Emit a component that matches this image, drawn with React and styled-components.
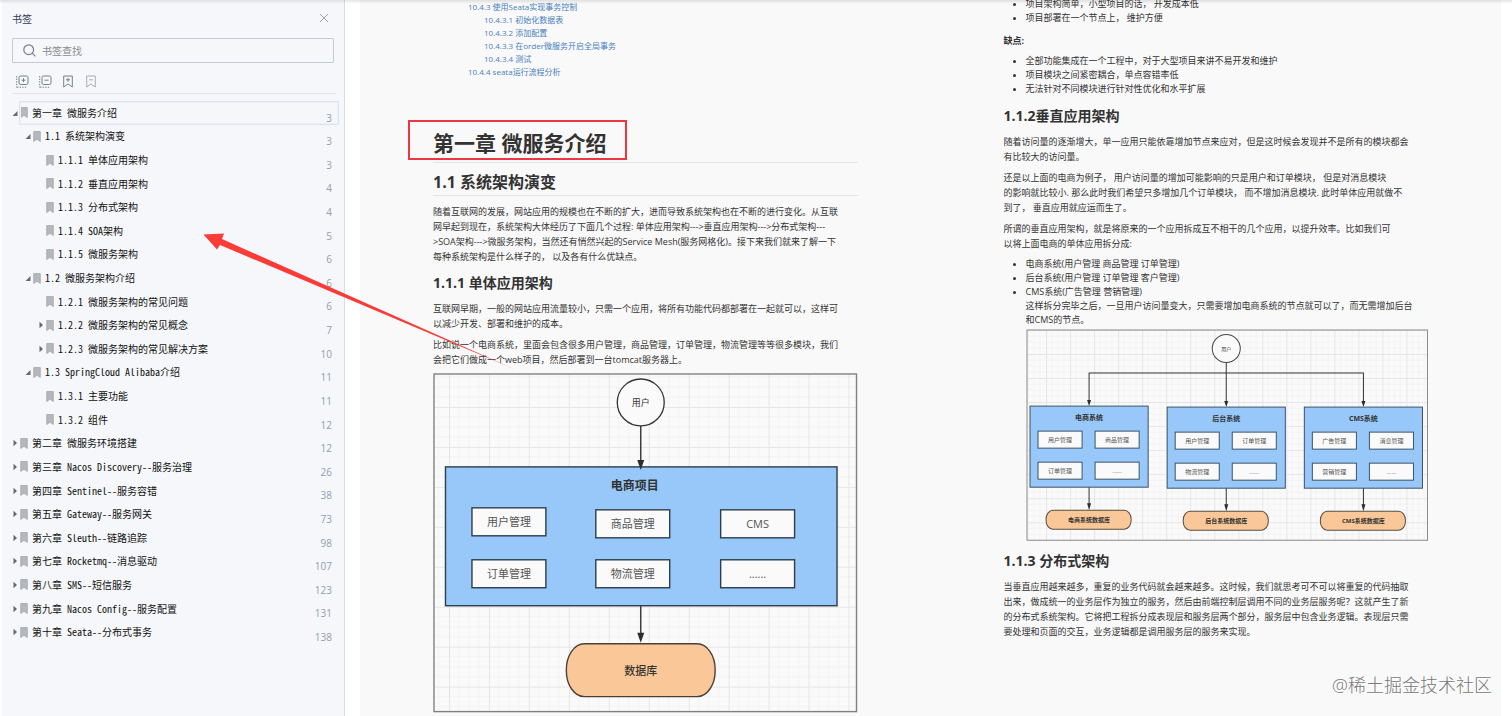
import styled, { createGlobalStyle, css } from 'styled-components';

const GlobalStyle = createGlobalStyle`
  * {
    box-sizing: border-box;
  }
  body {
    margin: 0;
    background: #fff;
    font-family: 'Open Sans', 'Noto Sans CJK SC', sans-serif;
    color: #333;
  }
`;

const Reader = styled.div`
  position: relative;
  display: flex;
  height: 100vh;
  overflow: hidden;
`;

const TopShadow = styled.div`
  position: absolute;
  top: 0;
  left: 0;
  right: 0;
  height: 4px;
  background: linear-gradient(rgba(0, 0, 0, 0.1), rgba(0, 0, 0, 0));
  pointer-events: none;
`;

/* ---------- sidebar ---------- */

const Sidebar = styled.aside`
  display: flex;
  flex-direction: column;
  flex: 0 0 345px;
  padding: 8px 5px 72px 10px;
  background: #f5f7fa;
  border-left: 2px solid #fcfdfe;
  border-right: 1px solid #d9dde3;
`;

const SidebarHeader = styled.header`
  display: flex;
  align-items: center;
  justify-content: space-between;
  height: 20px;
  padding-right: 8px;
`;

const SidebarTitle = styled.h2`
  margin: 0;
  font-size: 10px;
  font-weight: 400;
  color: #333d59;
`;

const IconButton = styled.button`
  display: flex;
  align-items: center;
  justify-content: center;
  width: 14px;
  height: 14px;
  padding: 0;
  border: 0;
  background: none;
  color: ${props => (props.$faded ? '#a9adb3' : '#7b8087')};
  cursor: pointer;
`;

const SearchBox = styled.label`
  display: flex;
  align-items: center;
  gap: 6px;
  height: 25px;
  margin: 10px 5px 0 0;
  padding: 0 10px;
  border: 1px solid #c6cad1;
  border-radius: 1px;
  color: #7b8087;
`;

const SearchInput = styled.input`
  flex: 1;
  min-width: 0;
  padding: 0;
  border: 0;
  outline: 0;
  background: none;
  font-family: inherit;
  font-size: 10px;

  &::placeholder {
    color: #8a8c90;
    opacity: 1;
  }
`;

const Toolbar = styled.div`
  display: flex;
  align-items: center;
  gap: 9px;
  height: 31px;
  margin-right: 3px;
  padding: 7px 0 0 3px;
  border-bottom: 1px solid #e2e5ea;
`;

const BookmarkList = styled.ul`
  display: grid;
  grid-auto-rows: 1fr;
  flex: 1;
  margin: 7px 0 0;
  padding: 0;
  list-style: none;
`;

const BookmarkRow = styled.li`
  display: flex;
  align-items: center;
  position: relative;
  padding-left: ${props => props.$level * 13}px;

  ${props => props.$selected && css`
    &::before {
      content: '';
      position: absolute;
      inset: 0 0 0 7px;
      border: 1px solid #e1e5ea;
      box-shadow: inset 0 0 0 1px #eceff3;
    }
  `}
`;

const Toggle = styled.span`
  display: flex;
  width: 8px;
  color: #666a70;
`;

const BookmarkLink = styled.a`
  display: flex;
  align-items: center;
  flex: 1;
  gap: 4px;
  font-family: 'Noto Sans Mono CJK SC', 'Liberation Mono', 'Noto Sans CJK SC', monospace;
  font-size: 10px;
  line-height: 14px;
  color: #111;
  text-decoration: none;
  white-space: pre;
`;

const PageNumber = styled.span`
  align-self: flex-end;
  padding-right: 7px;
  font-size: 10px;
  line-height: 14px;
  color: #949db0;
`;

/* ---------- document ---------- */

const Pages = styled.main`
  display: grid;
  grid-template-columns: 1fr 1fr;
  flex: 1;
  min-width: 0;
  margin: 0 11px 0 15px;
  background: #f9f9f9;
`;

const Page = styled.article`
  min-width: 0;
  padding: 0 73px;
`;

const Toc = styled.nav`
  display: flex;
  flex-direction: column;
  align-items: flex-start;
  padding-left: 35px;
`;

const TocLink = styled.a`
  padding-left: ${props => (props.$nested ? 16 : 0)}px;
  font-size: 8px;
  line-height: 13px;
  color: #4a80bd;
  text-decoration: none;
`;

const ChapterTitle = styled.h1`
  margin: 49px 0 0;
  padding-bottom: 3px;
  border-bottom: 1px solid #e4e4e4;
  font-size: 21px;
  line-height: 32px;
`;

const Highlight = styled.span`
  position: relative;

  &::after {
    content: '';
    position: absolute;
    inset: -9px -21px -3px -25px;
    border: 2px solid #ee3742;
  }
`;

const SectionTitle = styled.h2`
  margin: 8px 0;
  padding-bottom: 2px;
  border-bottom: 1px solid #e4e4e4;
  font-size: 16px;
  line-height: 22px;
`;

const TopicTitle = styled.h3`
  margin: 9px 0 8px;
  font-size: 14px;
  line-height: 20px;
`;

const Paragraph = styled.p`
  margin: 6px 0;
  font-size: 9px;
  font-weight: ${props => (props.$strong ? 700 : 400)};
  line-height: 15px;
  white-space: nowrap;
`;

const Bullets = styled.ul`
  margin: ${props => (props.$cut ? '-3px 0 8px' : '6px 0 10px')};
  padding-left: 22px;
  font-size: 9px;
  line-height: 14px;
  white-space: nowrap;
`;

const Figure = styled.svg`
  display: block;
  width: 100%;
  margin-top: ${props => (props.$spaced ? 6 : 2)}px;
  font-family: 'Open Sans', 'Noto Sans CJK SC', sans-serif;
`;

const Watermark = styled.div`
  position: absolute;
  right: 20px;
  bottom: 18px;
  font-size: 18px;
  font-weight: 300;
  line-height: 26px;
  color: #777;
  text-shadow: 1px 1px 0 #fff;
`;

const PointerArrow = styled.svg`
  position: absolute;
  top: 230px;
  left: 200px;
  pointer-events: none;
`;

/* ---------- data ---------- */

const bookmarks = [
  { level: 0, title: '第一章 微服务介绍', page: 3, state: 'open', selected: true },
  { level: 1, title: '1.1 系统架构演变', page: 3, state: 'open' },
  { level: 2, title: '1.1.1 单体应用架构', page: 3 },
  { level: 2, title: '1.1.2 垂直应用架构', page: 4 },
  { level: 2, title: '1.1.3 分布式架构', page: 4 },
  { level: 2, title: '1.1.4 SOA架构', page: 5 },
  { level: 2, title: '1.1.5 微服务架构', page: 6 },
  { level: 1, title: '1.2 微服务架构介绍', page: 6, state: 'open' },
  { level: 2, title: '1.2.1 微服务架构的常见问题', page: 6 },
  { level: 2, title: '1.2.2 微服务架构的常见概念', page: 7, state: 'closed' },
  { level: 2, title: '1.2.3 微服务架构的常见解决方案', page: 10, state: 'closed' },
  { level: 1, title: '1.3 SpringCloud Alibaba介绍', page: 11, state: 'open' },
  { level: 2, title: '1.3.1 主要功能', page: 11 },
  { level: 2, title: '1.3.2 组件', page: 12 },
  { level: 0, title: '第二章 微服务环境搭建', page: 12, state: 'closed' },
  { level: 0, title: '第三章 Nacos Discovery--服务治理', page: 26, state: 'closed' },
  { level: 0, title: '第四章 Sentinel--服务容错', page: 38, state: 'closed' },
  { level: 0, title: '第五章 Gateway--服务网关', page: 73, state: 'closed' },
  { level: 0, title: '第六章 Sleuth--链路追踪', page: 98, state: 'closed' },
  { level: 0, title: '第七章 Rocketmq--消息驱动', page: 107, state: 'closed' },
  { level: 0, title: '第八章 SMS--短信服务', page: 123, state: 'closed' },
  { level: 0, title: '第九章 Nacos Config--服务配置', page: 131, state: 'closed' },
  { level: 0, title: '第十章 Seata--分布式事务', page: 138, state: 'closed' },
];

const toc = [
  { title: '10.4.3 使用Seata实现事务控制' },
  { title: '10.4.3.1 初始化数据表', nested: true },
  { title: '10.4.3.2 添加配置', nested: true },
  { title: '10.4.3.3 在order微服务开启全局事务', nested: true },
  { title: '10.4.3.4 测试', nested: true },
  { title: '10.4.4 seata运行流程分析' },
];

const projectModules = [
  { x: 39, y: 135, label: '用户管理' },
  { x: 163, y: 137, label: '商品管理' },
  { x: 288, y: 137, label: 'CMS' },
  { x: 39, y: 187, label: '订单管理' },
  { x: 163, y: 187, label: '物流管理' },
  { x: 288, y: 187, label: '......' },
];

const systems = [
  { x: 4, y: 77, name: '电商系统', modules: ['用户管理', '商品管理', '订单管理', '......'] },
  { x: 141, y: 78, name: '后台系统', modules: ['用户管理', '订单管理', '物流管理', '......'] },
  { x: 278, y: 78, name: 'CMS系统', modules: ['广告管理', '消息管理', '营销管理', '......'] },
];

/* ---------- icons ---------- */

const CloseIcon = () => (
  <svg width="10" height="10" viewBox="0 0 10 10" stroke="#9a9ea6" fill="none">
    <path d="M1 1l8 8M9 1l-8 8" />
  </svg>
);

const SearchIcon = () => (
  <svg width="13" height="13" viewBox="0 0 13 13" stroke="currentColor" strokeWidth="1.2" fill="none">
    <circle cx="5.7" cy="5.7" r="4.9" />
    <path d="M9.2 9.2l3.2 3.2" />
  </svg>
);

const TreeIcon = ({ plus }) => (
  <svg width="13" height="13" viewBox="0 0 13 13" stroke="currentColor" fill="none">
    <rect x="3" y="1" width="9" height="8.5" rx="1.5" />
    <path d={plus ? 'M5.5 5.2h4M7.5 3.2v4' : 'M5.5 5.2h4'} />
    <path d="M.7 1v11.5M1 12.2h10" strokeDasharray="1.4 1.2" />
  </svg>
);

const RibbonIcon = ({ plus }) => (
  <svg width="12" height="13" viewBox="0 0 12 13" stroke="currentColor" fill="none">
    <path d="M1.7 1h8.6v11L6 9 1.7 12z" />
    <path d={plus ? 'M4 4.8h4M6 2.8v4' : 'M4 4.8h4'} />
  </svg>
);

const BookmarkIcon = () => (
  <svg width="8" height="11" viewBox="0 0 8 11">
    <path d="M.7.5h6.6v10L4 8.3.7 10.5z" fill="#b4b7bb" stroke="#9fa3a8" strokeWidth=".7" />
  </svg>
);

const ToggleIcon = ({ state }) => (
  <svg width="6" height="8" viewBox="0 0 6 8" fill="currentColor">
    {state === 'open' && <path d="M5.5 2v5H.5z" />}
    {state === 'closed' && <path d="M1.5.8L5 4 1.5 7.2z" />}
  </svg>
);

/* ---------- diagrams ---------- */

const Grid = ({ id, size, x, y }) => {
  const minor = size / 4;
  return (
    <pattern id={id} x={x} y={y} width={size} height={size} patternUnits="userSpaceOnUse">
      <path
        d={[1, 2, 3].map(n => `M${n * minor} 0v${size}M0 ${n * minor}h${size}`).join('')}
        stroke="#f3f3f3"
        fill="none"
      />
      <path d={`M0 0v${size}M0 0h${size}`} stroke="#e6e6e6" strokeWidth="2" fill="none" />
    </pattern>
  );
};

const ArrowHead = ({ x, y, w = 7, h = 10 }) => (
  <path d={`M${x} ${y}l${-w / 2} ${-h}h${w}z`} fill="#2d2d2d" />
);

const MonolithDiagram = () => (
  <Figure $spaced viewBox="0 0 425 340" textAnchor="middle" fill="#333" role="img" aria-label="单体应用架构">
    <defs>
      <Grid id="grid-large" size={40} x={16} y={34} />
    </defs>
    <rect x="1" y="1" width="423" height="338" fill="#fafafa" />
    <rect x="1" y="1" width="423" height="338" fill="url(#grid-large)" stroke="#808080" strokeWidth="1.4" />
    <circle cx="208" cy="29.5" r="23.5" fill="#fafafa" stroke="#333" strokeWidth="1.3" />
    <text x="208" y="33" fontSize="9">用户</text>
    <path d="M208 53v40M208 233v34" stroke="#333" strokeWidth="1.4" />
    <rect x="12.5" y="94" width="392" height="139" fill="#97c8f9" stroke="#2c3e4a" strokeWidth="1.4" />
    <ArrowHead x={208} y={97} />
    <text x="202" y="117" fontSize="12" fontWeight="700">电商项目</text>
    {projectModules.map(({ x, y, label }) => (
      <g key={label}>
        <rect x={x} y={y} width="74" height="28" fill="#fafafa" stroke="#2c3e4a" strokeWidth="1.4" />
        <text x={x + 37} y={y + 18} fontSize="11" fill="#555">{label}</text>
      </g>
    ))}
    <ArrowHead x={208} y={270} />
    <rect x="133.5" y="271" width="149" height="53" rx="18" ry="26" fill="#fac898" stroke="#4a4036" strokeWidth="1.4" />
    <text x="208" y="302" fontSize="11" fontWeight="500">数据库</text>
  </Figure>
);

const VerticalDiagram = () => (
  <Figure viewBox="0 0 402 212" textAnchor="middle" fill="#333" role="img" aria-label="垂直应用架构">
    <defs>
      <Grid id="grid-small" size={24} x={20} y={1} />
    </defs>
    <rect x="1" y="1" width="400" height="210" fill="#fafafa" />
    <rect x="1" y="1" width="400" height="210" fill="url(#grid-small)" stroke="#8a8a8a" />
    <circle cx="200" cy="19.5" r="14" fill="#fafafa" stroke="#444" />
    <text x="200" y="22" fontSize="5">用户</text>
    <path d="M200 34v40M63 74V44h274v30" stroke="#333" fill="none" />
    {systems.map(({ x, y, name, modules }) => (
      <g key={name}>
        <rect x={x} y={y} width="118" height="81" fill="#97c8f9" stroke="#3c5468" />
        <ArrowHead x={x + 59} y={y} w={4} h={6} />
        <text x={x + 59} y={y + 14} fontSize="7" fontWeight="700">{name}</text>
        {modules.map((label, i) => {
          const left = x + 8 + (i % 2) * 57;
          const top = y + 25 + Math.floor(i / 2) * 31;
          return (
            <g key={label}>
              <rect x={left} y={top} width="44" height="17" fill="#fafafa" stroke="#3c5468" />
              <text x={left + 22} y={top + 11} fontSize="6" fill="#555">{label}</text>
            </g>
          );
        })}
        <path d={`M${x + 59} ${y + 81}v18`} stroke="#333" />
        <ArrowHead x={x + 59} y={y + 104} w={4} h={7} />
        <rect x={x + 16} y={y + 104} width="85" height="19" rx="7" ry="9" fill="#fac898" stroke="#5a4c40" />
        <text x={x + 59} y={y + 116} fontSize="6" fontWeight="700">{name}数据库</text>
      </g>
    ))}
  </Figure>
);

/* ---------- app ---------- */

const Lines = ({ text }) =>
  text.map((line, i) => (
    <span key={line}>
      {i > 0 && <br />}
      {line}
    </span>
  ));

function BookmarkPanel() {
  return (
    <Sidebar>
      <SidebarHeader>
        <SidebarTitle>书签</SidebarTitle>
        <IconButton aria-label="关闭"><CloseIcon /></IconButton>
      </SidebarHeader>
      <SearchBox>
        <SearchIcon />
        <SearchInput type="text" placeholder="书签查找" aria-label="书签查找" />
      </SearchBox>
      <Toolbar>
        <IconButton aria-label="展开"><TreeIcon plus /></IconButton>
        <IconButton aria-label="折叠"><TreeIcon /></IconButton>
        <IconButton aria-label="添加书签"><RibbonIcon plus /></IconButton>
        <IconButton aria-label="删除书签" $faded><RibbonIcon /></IconButton>
      </Toolbar>
      <BookmarkList>
        {bookmarks.map(({ level, title, page, state, selected }) => (
          <BookmarkRow key={title} $level={level} $selected={selected}>
            <Toggle><ToggleIcon state={state} /></Toggle>
            <BookmarkLink href="#">
              <BookmarkIcon />
              {title}
            </BookmarkLink>
            <PageNumber>{page}</PageNumber>
          </BookmarkRow>
        ))}
      </BookmarkList>
    </Sidebar>
  );
}

function App() {
  return (
    <Reader>
      <GlobalStyle />
      <BookmarkPanel />
      <Pages>
        <Page>
          <Toc>
            {toc.map(({ title, nested }) => (
              <TocLink key={title} href="#" $nested={nested}>{title}</TocLink>
            ))}
          </Toc>
          <ChapterTitle><Highlight>第一章 微服务介绍</Highlight></ChapterTitle>
          <SectionTitle>1.1 系统架构演变</SectionTitle>
          <Paragraph>
            <Lines
              text={[
                '随着互联网的发展，网站应用的规模也在不断的扩大，进而导致系统架构也在不断的进行变化。从互联',
                '网早起到现在，系统架构大体经历了下面几个过程: 单体应用架构--->垂直应用架构--->分布式架构---',
                '>SOA架构--->微服务架构，当然还有悄然兴起的Service Mesh(服务网格化)。接下来我们就来了解一下',
                '每种系统架构是什么样子的， 以及各有什么优缺点。',
              ]}
            />
          </Paragraph>
          <TopicTitle>1.1.1 单体应用架构</TopicTitle>
          <Paragraph>
            <Lines
              text={[
                '互联网早期，一般的网站应用流量较小，只需一个应用，将所有功能代码都部署在一起就可以，这样可',
                '以减少开发、部署和维护的成本。',
              ]}
            />
          </Paragraph>
          <Paragraph>
            <Lines
              text={[
                '比如说一个电商系统，里面会包含很多用户管理，商品管理，订单管理，物流管理等等很多模块，我们',
                '会把它们做成一个web项目，然后部署到一台tomcat服务器上。',
              ]}
            />
          </Paragraph>
          <MonolithDiagram />
        </Page>
        <Page>
          <Bullets $cut>
            <li>项目架构简单，小型项目的话， 开发成本低</li>
            <li>项目部署在一个节点上， 维护方便</li>
          </Bullets>
          <Paragraph $strong>缺点:</Paragraph>
          <Bullets>
            <li>全部功能集成在一个工程中，对于大型项目来讲不易开发和维护</li>
            <li>项目模块之间紧密耦合，单点容错率低</li>
            <li>无法针对不同模块进行针对性优化和水平扩展</li>
          </Bullets>
          <TopicTitle>1.1.2垂直应用架构</TopicTitle>
          <Paragraph>
            <Lines
              text={[
                '随着访问量的逐渐增大，单一应用只能依靠增加节点来应对，但是这时候会发现并不是所有的模块都会',
                '有比较大的访问量。',
              ]}
            />
          </Paragraph>
          <Paragraph>
            <Lines
              text={[
                '还是以上面的电商为例子， 用户访问量的增加可能影响的只是用户和订单模块， 但是对消息模块',
                '的影响就比较小. 那么此时我们希望只多增加几个订单模块， 而不增加消息模块. 此时单体应用就做不',
                '到了， 垂直应用就应运而生了。',
              ]}
            />
          </Paragraph>
          <Paragraph>
            <Lines
              text={[
                '所谓的垂直应用架构，就是将原来的一个应用拆成互不相干的几个应用，以提升效率。比如我们可',
                '以将上面电商的单体应用拆分成:',
              ]}
            />
          </Paragraph>
          <Bullets>
            <li>电商系统(用户管理 商品管理 订单管理)</li>
            <li>后台系统(用户管理 订单管理 客户管理)</li>
            <li>
              <Lines
                text={[
                  'CMS系统(广告管理 营销管理)',
                  '这样拆分完毕之后，一旦用户访问量变大，只需要增加电商系统的节点就可以了，而无需增加后台',
                  '和CMS的节点。',
                ]}
              />
              <VerticalDiagram />
            </li>
          </Bullets>
          <TopicTitle>1.1.3 分布式架构</TopicTitle>
          <Paragraph>
            <Lines
              text={[
                '当垂直应用越来越多，重复的业务代码就会越来越多。这时候，我们就思考可不可以将重复的代码抽取',
                '出来，做成统一的业务层作为独立的服务，然后由前端控制层调用不同的业务层服务呢？这就产生了新',
                '的分布式系统架构。它将把工程拆分成表现层和服务层两个部分，服务层中包含业务逻辑。表现层只需',
                '要处理和页面的交互，业务逻辑都是调用服务层的服务来实现。',
              ]}
            />
          </Paragraph>
        </Page>
      </Pages>
      <TopShadow />
      <PointerArrow width="316" height="142" viewBox="0 0 316 142">
        <path d="M3.5 4.5L24 3.5 22 9l292 130L20 15l-3 4.5z" fill="#fa3b36" />
      </PointerArrow>
      <Watermark>@稀土掘金技术社区</Watermark>
    </Reader>
  );
}

export default App;
